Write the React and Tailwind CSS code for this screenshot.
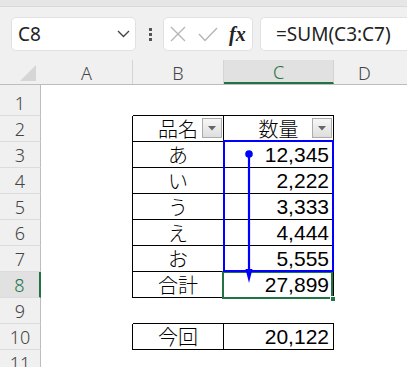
import React from "react";

const JP = { fontFamily: '"Noto Sans CJK JP", "Noto Sans", sans-serif' };
const NUM = { fontFamily: '"Liberation Sans", Arial, sans-serif' };
const UI = { fontFamily: '"Noto Sans", "Liberation Sans", sans-serif' };

function DropBtn() {
  return (
    <div className="absolute right-[1px] top-[2px] w-[20px] h-[20px] border border-[#ababab] bg-gradient-to-b from-[#f7f7f7] to-[#dedede] flex items-center justify-center">
      <svg width="8" height="5" viewBox="0 0 8 5">
        <polygon points="0,0 8,0 4,4.5" fill="#666" />
      </svg>
    </div>
  );
}

const rows = [
  { n: 1, h: "h-[31px]", b: "", c: "", line: true, table: false },
  { n: 2, h: "h-[26px]", b: "品名", c: "数量", line: true, table: true, head: true },
  { n: 3, h: "h-[26px]", b: "あ", c: "12,345", line: true, table: true },
  { n: 4, h: "h-[26px]", b: "い", c: "2,222", line: true, table: true },
  { n: 5, h: "h-[26px]", b: "う", c: "3,333", line: true, table: true },
  { n: 6, h: "h-[26px]", b: "え", c: "4,444", line: true, table: true },
  { n: 7, h: "h-[26px]", b: "お", c: "5,555", line: true, table: true },
  { n: 8, h: "h-[26px]", b: "合計", c: "27,899", line: true, table: true, sel: true },
  { n: 9, h: "h-[26px]", b: "", c: "", line: true, table: false },
  { n: 10, h: "h-[26px]", b: "今回", c: "20,122", line: true, table: true },
  { n: 11, h: "h-[26px]", b: "", c: "", line: false, table: false },
];

export default function App() {
  return (
    <div className="w-[407px] h-[367px] overflow-hidden bg-white relative">
      {/* top strip */}
      <div className="h-[7px] bg-[#e6e6e6] border-b border-[#d9d9d9]" />
      {/* formula bar */}
      <div className="h-[53px] bg-[#f0f0f0] flex items-start pt-[10px]">
        <div className="ml-[11px] w-[125px] h-[34px] bg-white border border-[#e1e1e1] rounded-[5px] flex items-center justify-between pl-[6px] pr-[5px]">
          <span className="text-[19px] text-[#222] leading-none" style={UI}>C8</span>
          <svg width="13" height="8" viewBox="0 0 13 8">
            <polyline points="1,1 6.5,6.5 12,1" fill="none" stroke="#444" strokeWidth="1.4" />
          </svg>
        </div>
        <div className="ml-[12px] w-[4px] h-[34px] flex flex-col items-center justify-center gap-[2px]">
          <div className="w-[3px] h-[3px] bg-[#555]" />
          <div className="w-[3px] h-[3px] bg-[#555]" />
          <div className="w-[3px] h-[3px] bg-[#555]" />
        </div>
        <div className="ml-[11px] w-[90px] h-[34px] bg-white border border-[#e1e1e1] rounded-[5px] flex items-center pl-[6px]">
          <svg width="16" height="16" viewBox="0 0 16 16">
            <line x1="1" y1="1" x2="15" y2="15" stroke="#b4b4b4" strokeWidth="1.3" />
            <line x1="15" y1="1" x2="1" y2="15" stroke="#b4b4b4" strokeWidth="1.3" />
          </svg>
          <svg className="ml-[12px]" width="20" height="15" viewBox="0 0 20 15">
            <polyline points="1,7 7,13.5 19,1" fill="none" stroke="#b4b4b4" strokeWidth="1.3" />
          </svg>
          <span className="ml-[11px] text-[20px] italic font-bold text-[#222] leading-none" style={{ fontFamily: '"Liberation Serif", "Times New Roman", serif' }}>fx</span>
        </div>
        <div className="ml-[7px] flex-1 h-[34px] bg-white border border-r-0 border-[#e1e1e1] rounded-l-[5px] flex items-center pl-[15px]">
          <span className="text-[19px] text-[#222] leading-none" style={UI}>=SUM(C3:C7)</span>
        </div>
      </div>

      {/* column headers */}
      <div className="flex h-[25px] bg-[#f0f0f0] border-b border-[#bdbdbd] text-[18px] text-[#444] font-light" style={UI}>
        <div className="w-[41px] relative">
          <svg className="absolute left-[20px] top-[5px]" width="16" height="16" viewBox="0 0 16 16">
            <polygon points="16,0 16,16 0,16" fill="#d6d6d6" />
          </svg>
        </div>
        <div className="w-[92px] border-r border-[#d4d4d4] flex items-end justify-center leading-[22px]">A</div>
        <div className="w-[91px] border-r border-[#d4d4d4] flex items-end justify-center leading-[22px]">B</div>
        <div className="w-[110px] border-r border-[#d4d4d4] bg-[#e1e1e1] border-b-2 border-b-[#217346] flex items-end justify-center leading-[20px] text-[#217346]">C</div>
        <div className="flex-1 flex items-end justify-center leading-[22px] pr-[12px]">D</div>
      </div>

      {/* grid */}
      <div className="relative">
        {rows.map((r) => (
          <div key={r.n} className={`flex ${r.h}`}>
            <div
              className={`w-[41px] border-b border-[#dcdcdc] flex items-center justify-center text-[18px] leading-[20px] font-light ${
                r.sel
                  ? "bg-[#e1e1e1] text-[#217346] border-r-2 border-r-[#217346]"
                  : "bg-[#f0f0f0] text-[#444] border-r border-r-[#bdbdbd]"
              } ${r.n === 1 ? "pt-[6px]" : ""}`}
              style={UI}
            >
              {r.n}
            </div>
            <div className={`w-[92px] ${r.table ? "border-r border-black" : ""}`} />
            <div
              className={`w-[91px] relative flex items-center justify-center text-[20px] leading-[22px] font-light text-black ${
                r.table ? "border-r border-black" : ""
              } ${r.line ? "border-b border-b-black" : ""}`}
              style={JP}
            >
              {r.b}
              {r.head && <DropBtn />}
            </div>
            <div
              className={`w-[110px] relative flex items-center ${r.head ? "justify-center text-[20px] leading-[22px] font-light" : "justify-end pr-[4px] text-[21px] leading-[22px] pt-[1px]"} text-black ${
                r.table ? "border-r border-black" : ""
              } ${r.line ? "border-b border-b-black" : ""}`}
              style={r.head ? JP : NUM}
            >
              {r.c}
              {r.head && <DropBtn />}
            </div>
            <div className="flex-1" />
          </div>
        ))}

        {/* green active cell C8 */}
        <div className="absolute left-[222px] top-[186px] w-[111px] h-[28px] border-2 border-[#217346]" />
        <div className="absolute left-[330px] top-[211px] w-[6px] h-[6px] bg-[#217346] border border-white" />

        {/* blue range */}
        <div className="absolute left-[223px] top-[55px] w-[111px] h-[132px] border-[2.5px] border-[#0000ff]" />

        {/* arrow */}
        <svg className="absolute left-[240px] top-[62px]" width="20" height="140" viewBox="0 0 20 140">
          <circle cx="9" cy="7" r="3.8" fill="#0000ff" />
          <line x1="9" y1="7" x2="9" y2="122" stroke="#0000ff" strokeWidth="2.2" />
          <polygon points="5.5,122 12.5,122 9,136" fill="#0000ff" />
        </svg>
      </div>
    </div>
  );
}
